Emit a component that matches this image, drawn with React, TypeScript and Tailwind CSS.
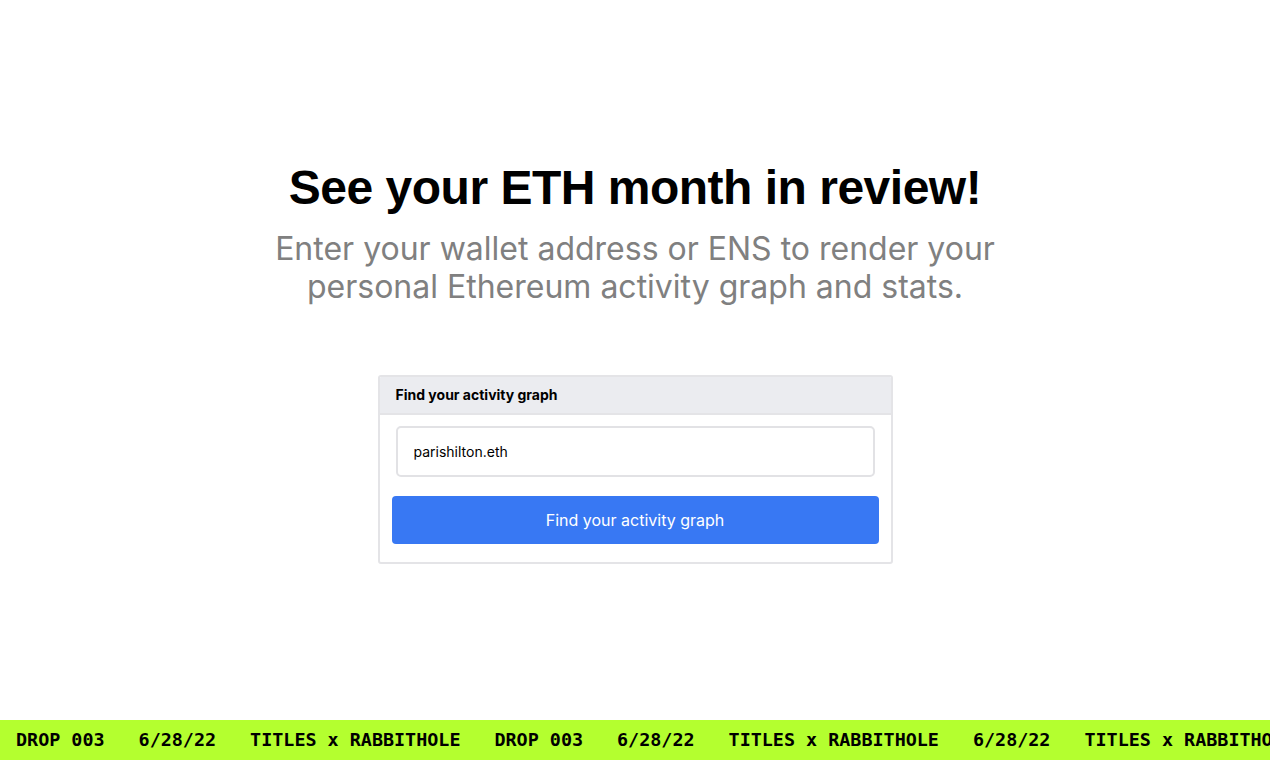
import { useState } from "react";

const tickerItems = [
  "DROP 003",
  "6/28/22",
  "TITLES x RABBITHOLE",
  "DROP 003",
  "6/28/22",
  "TITLES x RABBITHOLE",
  "6/28/22",
  "TITLES x RABBITHOLE",
];

export default function App() {
  const [address, setAddress] = useState("parishilton.eth");

  return (
    <div className="flex h-screen flex-col bg-white font-['Inter',sans-serif]">
      <main className="flex flex-1 flex-col items-center pt-[158px]">
        <h1 className="font-['Liberation_Sans',sans-serif] text-[48px] font-bold leading-[60px] tracking-[-0.5px] text-black">
          See your ETH month in review!
        </h1>
        <p className="mt-[12px] max-w-[760px] text-center text-[32px] leading-[38px] text-[#808080]">
          Enter your wallet address or ENS to render your
          <br />
          personal Ethereum activity graph and stats.
        </p>

        <div className="mt-[69px] w-[515px] overflow-hidden rounded-[3px] border-2 border-[#e4e4e7]">
          <div className="border-b-2 border-[#e4e4e7] bg-[#ebecf0] px-4 py-[8px] text-[14px] font-bold leading-5 text-black">
            Find your activity graph
          </div>
          <form
            className="flex flex-col gap-[19px] px-3 pb-[18px] pt-[11px]"
            onSubmit={(e) => e.preventDefault()}
          >
            <div className="px-1">
              <input
                value={address}
                onChange={(e) => setAddress(e.target.value)}
                className="h-[51px] w-full rounded-[5px] border-2 border-[#e2e2e5] px-4 text-[14px] text-black outline-none"
              />
            </div>
            <button
              type="submit"
              className="h-[48px] w-full rounded-[4px] bg-[#3878f3] text-[16px] text-white"
            >
              Find your activity graph
            </button>
          </form>
        </div>
      </main>

      <div className="flex h-10 items-center overflow-hidden whitespace-nowrap bg-[#b4ff2f] pl-4 font-['DejaVu_Sans_Mono',monospace] text-[18.4px] font-bold text-black">
        {tickerItems.map((item, i) => (
          <span key={i} className="mr-[34px] shrink-0">
            {item}
          </span>
        ))}
      </div>
    </div>
  );
}
